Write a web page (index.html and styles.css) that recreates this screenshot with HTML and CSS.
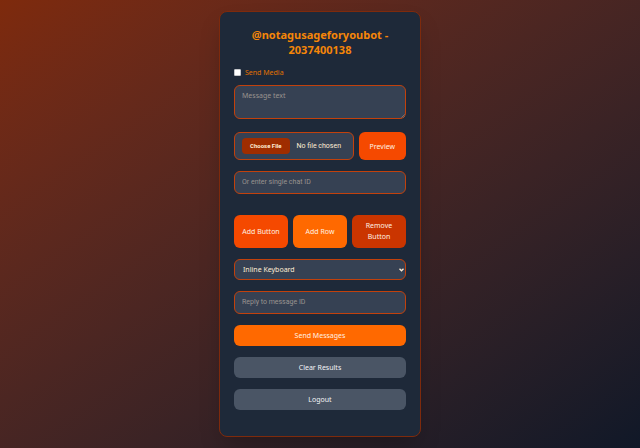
FILE: index.html
```html
<!DOCTYPE html>
<html lang="en">
<head>
<meta charset="utf-8">
<meta name="viewport" content="width=device-width, initial-scale=1">
<title>Bot panel</title>
<link rel="stylesheet" href="styles.css">
</head>
<body>
<main class="card">
  <h1 class="title">@notagusageforyoubot - 2037400138</h1>
  <form class="form">
    <label class="check"><input type="checkbox" class="check-box"><span>Send Media</span></label>
    <div class="wrap message-wrap">
      <textarea class="field message" placeholder="Message text" aria-label="Message text"></textarea>
      <svg class="grip" viewBox="0 0 5 5" aria-hidden="true"><path d="M0.5 4.5 4.5 0.5M3 4.5 4.5 3"/></svg>
    </div>
    <div class="file-row">
      <input type="file" class="field file" aria-label="Chat ID file">
      <button type="button" class="btn red">Preview</button>
    </div>
    <input type="text" class="field chat" placeholder="Or enter single chat ID" aria-label="Single chat ID">
    <div class="button-row">
      <button type="button" class="btn red">Add Button</button>
      <button type="button" class="btn orange">Add Row</button>
      <button type="button" class="btn dark">Remove Button</button>
    </div>
    <div class="wrap">
      <select class="field select" aria-label="Keyboard type"><option>Inline Keyboard</option></select>
      <svg class="arrow" viewBox="0 0 5 4" aria-hidden="true"><path d="M0.5 0.8 2.5 2.8 4.5 0.8"/></svg>
    </div>
    <input type="text" class="field" placeholder="Reply to message ID" aria-label="Reply to message ID">
    <button type="submit" class="btn orange">Send Messages</button>
    <button type="button" class="btn gray">Clear Results</button>
    <button type="button" class="btn gray">Logout</button>
  </form>
</main>
</body>
</html>
```
FILE: styles.css
```css
* { box-sizing: border-box; }

body {
  display: flex;
  align-items: center;
  justify-content: center;
  min-height: 100vh;
  margin: 0;
  background: linear-gradient(to bottom right in oklab, #7e2a0c, #101828);
  font-family: "Noto Sans", sans-serif;
  font-size: 7px;
  line-height: 11px;
}

.card {
  width: 100%;
  max-width: 202px;
  padding: 15px 14px 26px;
  border: 1px solid #7e2a0c;
  border-radius: 8px;
  background: #1e2939;
  box-shadow: 0 12px 24px -6px rgba(0, 0, 0, 0.25);
}

.title {
  margin: 0 0 10px;
  color: #f58608;
  font-size: 11px;
  font-weight: 700;
  line-height: 15px;
  text-align: center;
}

.form {
  display: flex;
  flex-direction: column;
  gap: 11px;
}

.check {
  display: flex;
  align-items: center;
  gap: 4px;
  margin-bottom: -4px;
  color: #e17100;
}

.check-box {
  appearance: none;
  width: 7px;
  height: 7px;
  margin: 0;
  border: 1px solid #c4c6ca;
  border-radius: 1px;
  background: #ffffff;
}

.check-box:checked {
  background: #f54900;
}

.wrap {
  position: relative;
}

.field {
  display: block;
  width: 100%;
  min-width: 0;
  margin: 0;
  padding: 5px 7px 6px;
  border: 1px solid #c2410c;
  border-radius: 6px;
  background: #364153;
  color: #ffedd4;
  font-family: Roboto, sans-serif;
  font-size: 7px;
  line-height: 10px;
}

.field::placeholder {
  color: #99938f;
}

.message-wrap {
  margin-bottom: 2px;
}

.message {
  height: 34px;
  font-family: "Noto Sans", sans-serif;
  resize: none;
}

.grip {
  position: absolute;
  right: 1px;
  bottom: 1px;
  width: 4px;
  height: 4px;
  fill: none;
  stroke: #99938f;
  stroke-width: 0.7;
}

.file-row {
  display: flex;
  gap: 5px;
}

.file {
  flex: 1;
  padding: 5px 7px;
}

.file::file-selector-button {
  margin: 0 7px 0 0;
  padding: 3px 8px;
  border: 0;
  border-radius: 4px;
  background: #9f2d00;
  color: #ffedd4;
  font: 700 6px/10px Roboto, sans-serif;
}

.chat {
  margin-bottom: 10px;
}

.button-row {
  display: grid;
  grid-template-columns: repeat(3, 1fr);
  gap: 5px;
}

.select {
  appearance: none;
  padding: 5px 8px 4px;
  font-family: "Noto Sans", sans-serif;
}

.arrow {
  position: absolute;
  top: 9px;
  right: 2px;
  width: 5px;
  height: 4px;
  fill: none;
  stroke: #ffedd4;
  stroke-width: 1.3;
  pointer-events: none;
}

.btn {
  padding: 5px 7px;
  border: 0;
  border-radius: 6px;
  color: #fff1e2;
  font: inherit;
}

.button-row .btn {
  padding: 5px 6px 6px;
}

.file-row .btn {
  padding: 5px 11px;
}

.red { background: #f54900; }
.orange { background: #ff6900; }
.dark { background: #ca3500; }
.gray { background: #4a5565; color: #f3f4f6; }
```
